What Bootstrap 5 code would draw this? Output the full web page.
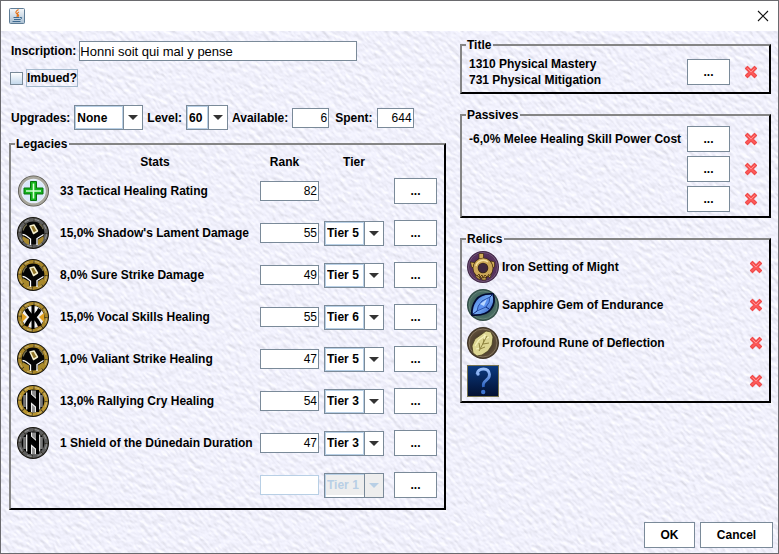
<!DOCTYPE html>
<html lang="en">
<head>
<meta charset="utf-8">
<meta name="viewport" content="width=device-width, initial-scale=1">
<title>Legendary item</title>
<link href="https://cdn.jsdelivr.net/npm/bootstrap@5.3.0/dist/css/bootstrap.min.css" rel="stylesheet">
<style>
  body { font: bold 12px/14px "Liberation Sans", Arial, sans-serif; color: #000; }
  .win { border: 1px solid #6a6a6e; background: #fff; }
  .titlebar { height: 30px; padding: 0 9px 0 8px; }
  .plain-btn { background: none; border: 0; padding: 0; line-height: 0; }
  .surface {
    background: #f0f0fb url("data:image/svg+xml,%3Csvg xmlns='http://www.w3.org/2000/svg' width='1000' height='700'%3E%3Cfilter id='f' x='0' y='0' width='1' height='1' color-interpolation-filters='sRGB'%3E%3CfeTurbulence type='fractalNoise' baseFrequency='.13 .26' numOctaves='3' seed='4'/%3E%3CfeDiffuseLighting surfaceScale='.4' diffuseConstant='1.12' lighting-color='%23f3f3ff'%3E%3CfeDistantLight azimuth='235' elevation='62'/%3E%3C/feDiffuseLighting%3E%3C/filter%3E%3Crect x='-700' y='-1200' width='2600' height='2600' transform='rotate(48)' filter='url(%23f)'/%3E%3C/svg%3E");
  }
  .main-grid { display: grid; grid-template-columns: minmax(0, 437fr) minmax(0, 311fr); column-gap: 14px; padding: 7px 7px 0 8px; }
  .side { display: flex; flex-direction: column; gap: 14px; }
  .group-box { border: 2px solid; border-color: #858585 #000 #000 #858585; padding: 0; margin: 0; }
  .group-box > legend { float: none; width: auto; margin: 0 0 0 4px; padding: 0 2px 0 1px; font: inherit; }
  .field { height: 20px; border: 1px solid #7a8a99; border-radius: 0; background: #fff; padding: 0; font-weight: 400; font-size: 13px; line-height: 16px; color: #000; min-width: 0; }
  .num { width: 59px; padding-right: 1px; font-size: 12px; text-align: right; }
  .num-sm { width: 37px; }
  .field:disabled { border-color: #b8cfe5; }
  .combo {
    --frame: #b8cfe5; --line: #7a8a99;
    appearance: none; height: 25px; border: 1px solid #7a8a99; border-radius: 0; padding: 0 20px 0 2px; font: inherit; color: #000; opacity: 1;
    background:
      url("data:image/svg+xml,%3Csvg xmlns='http://www.w3.org/2000/svg' width='10' height='5'%3E%3Cpath d='M0 0h10L5 5z' fill='%23333'/%3E%3C/svg%3E") right 4px center / 10px 5px no-repeat,
      linear-gradient(var(--line), var(--line)) right 18px top / 1px 100% no-repeat,
      linear-gradient(var(--frame), var(--frame)) right 19px top / 1px 100% no-repeat,
      linear-gradient(var(--frame), var(--frame)) left top / 1px 100% no-repeat,
      linear-gradient(var(--frame), var(--frame)) left top / calc(100% - 19px) 1px no-repeat,
      linear-gradient(var(--frame), var(--frame)) left bottom / calc(100% - 19px) 1px no-repeat,
      #fff;
  }
  .combo:disabled {
    color: #b8cfe5;
    background:
      url("data:image/svg+xml,%3Csvg xmlns='http://www.w3.org/2000/svg' width='10' height='5'%3E%3Cpath d='M0 0h10L5 5z' fill='%23b8cfe5'/%3E%3C/svg%3E") right 4px center / 10px 5px no-repeat,
      linear-gradient(var(--line), var(--line)) right 18px top / 1px 100% no-repeat,
      linear-gradient(var(--frame), var(--frame)) left top / 1px 100% no-repeat,
      linear-gradient(var(--frame), var(--frame)) left top / calc(100% - 19px) 1px no-repeat,
      linear-gradient(#fff, #fff) left bottom / calc(100% - 19px) 2px no-repeat,
      #eee;
  }
  .combo-tier { width: 60px; }
  .combo-up { width: 69px; }
  .combo-lv { width: 42px; }
  .push { height: 26px; background: #fff; border: 1px solid #7a8a99; border-radius: 0; padding: 0; font: inherit; color: #000; }
  .push-dots { width: 43px; }
  .push-ok { width: 51px; }
  .push-cancel { width: 73px; }
  .tick { appearance: none; width: 13px; height: 13px; border: 1px solid #7a8a99; margin: 0 3px 0 1px; background: linear-gradient(#fff, #c4d8ec); }
  .tick:checked { background: #7a8a99; }
  .tick-label { border: 1px solid #a3b8cc; height: 18px; line-height: 16px; }
  .row-insc { height: 26px; gap: 3px; padding-left: 2px; }
  .row-insc .field { width: 278px; }
  .row-imb { height: 28px; }
  .row-up { height: 25px; margin: 13px 0 7px; gap: 4px; padding-left: 2px; }
  .row-up .num-sm { margin-right: 2px; }
  .legacies { table-layout: fixed; width: 100%; margin-bottom: 2px; }
  .legacies td { padding: 0; height: 42px; vertical-align: middle; }
  .legacies thead th, .legacies thead td { height: 19px; padding: 3px 10px 0 0; text-align: center; }
  .legacies thead th.rank-head { padding-right: 15px; }
  .legacies .c-icon { width: 49px; }
  .legacies .c-rank { width: 64px; }
  .legacies .c-tier { width: 70px; }
  .legacies .c-btn { width: 50px; }
  .legacies td:first-child { padding-left: 6px; }
  .glyph { width: 32px; height: 32px; display: block; flex: none; }
  .cross { width: 14px; height: 14px; display: block; }
  .title-body { padding: 4px 11px 4px 7px; }
  .title-body p { line-height: 16px; }
  .passive-body { padding: 4px 11px 4px 7px; display: grid; grid-template-columns: minmax(0, 1fr); row-gap: 4px; }
  .relic-body { padding: 5px 6px 4px 5px; display: grid; grid-template-columns: minmax(0, 1fr); row-gap: 6px; }
  .cross-gap { gap: 14px; }
  .relic-name { margin: 0 auto 0 3px; }
  .foot { padding: 11px 5px 5px; gap: 5px; }
</style>
<script src="https://cdn.jsdelivr.net/npm/bootstrap@5.3.0/dist/js/bootstrap.bundle.min.js"></script>
</head>
<body>
<svg width="0" height="0" class="position-absolute" aria-hidden="true">
  <defs>
    <linearGradient id="gGem" x1="0" y1="0" x2="1" y2="1"><stop offset="0" stop-color="#2c62d0"/><stop offset=".5" stop-color="#7db2f8"/><stop offset="1" stop-color="#1b46b4"/></linearGradient>
    <linearGradient id="gNight" x1="0" y1="0" x2="0" y2="1"><stop offset="0" stop-color="#0b3a80"/><stop offset="1" stop-color="#020f30"/></linearGradient>
    <linearGradient id="gAsk" x1="0" y1="0" x2="0" y2="1"><stop offset="0" stop-color="#9cc0fa"/><stop offset="1" stop-color="#2c62c0"/></linearGradient>
    <radialGradient id="gPurple"><stop offset="0" stop-color="#2c1230"/><stop offset=".8" stop-color="#59345f"/><stop offset="1" stop-color="#3c2442"/></radialGradient>
    <radialGradient id="gTeal"><stop offset="0" stop-color="#1c3834"/><stop offset=".8" stop-color="#4a6e66"/><stop offset="1" stop-color="#2c4640"/></radialGradient>
    <radialGradient id="gBrown"><stop offset="0" stop-color="#2c241a"/><stop offset=".8" stop-color="#5c4c38"/><stop offset="1" stop-color="#3a3024"/></radialGradient>

    <symbol id="cross" viewBox="0 0 14 14">
      <path d="M1.500 3.500l2-2L7 5l3.500-3.500 2 2L9 7l3.500 3.500-2 2L7 9l-3.500 3.500-2-2L5 7z" fill="#ff5c5c" stroke="#f04c4c" stroke-width="1.200" stroke-linejoin="round"/>
      <path d="M3.500 3.500L7 7l3.500-3.500" fill="none" stroke="#ff9090" stroke-width="1"/>
    </symbol>
    <symbol id="ring" viewBox="0 0 32 32">
      <circle cx="16" cy="16" r="16" fill="#14120c"/>
      <circle cx="16" cy="16" r="13.200" fill="#050505" stroke="currentColor" stroke-width="3.600"/>
      <circle cx="16" cy="16" r="13.600" fill="none" stroke="#fff" stroke-opacity=".35" stroke-width="1" stroke-dasharray="6 4.700"/>
      <circle cx="16" cy="16" r="13.200" fill="none" stroke="#1a1608" stroke-opacity=".6" stroke-width="3" stroke-dasharray="1.200 9.170"/>
    </symbol>
    <symbol id="runeY" viewBox="0 0 32 32">
      <path d="M5.500 19l6.500 3.500V28q-4.500-1.500-6.500-6z" fill="#a8892c"/>
      <path d="M26.500 19L21 22.500V28q4.500-2 5.500-6z" fill="#a8892c"/>
      <path d="M5.500 17.500q2 0 4 1.500l4 3V28" fill="none" stroke="#fff" stroke-width="1.300"/>
      <path d="M26.500 17.500L20 21.500V28" fill="none" stroke="#fff" stroke-width="1.300"/>
      <path d="M6 13.500Q7 9.500 10 7.500M22.500 7Q25 9 26 12" fill="none" stroke="#77704e" stroke-width="1.100"/>
      <path d="M13 9l4-1 3.500 6-4 2.500z" fill="#8f7428" stroke="#f4eecb" stroke-width="1.500" stroke-linejoin="round"/>
    </symbol>
    <symbol id="runeX" viewBox="0 0 32 32">
      <circle cx="16" cy="16" r="11" fill="#f0f0f0"/>
      <path d="M5 12l5 4-5 5zM27 12l-5 4 5 5z" fill="#e0a020"/>
      <path d="M8.500 24.500l2.500-3.500 1 5zM20.500 26l.5-4 3 3z" fill="#ee7c14"/>
      <path d="M9 8q3 6 7 8-4 2-7 9M23 8q-3 6-7 8 4 2 7 9" fill="none" stroke="#000" stroke-width="4"/>
      <path d="M16 4v24" stroke="#000" stroke-width="3"/>
      <path d="M13 5.500v4M19 5.500v4" stroke="#fff" stroke-width="1.500"/>
    </symbol>
    <symbol id="runeH" viewBox="0 0 32 32">
      <path d="M7.500 10v12M24.500 10v12" stroke="#777" stroke-width="2.600"/>
      <path d="M9.700 7.500v17M22.600 7.500v17" stroke="#f4f4f4" stroke-width="1.300"/>
      <path d="M14.500 5.500v5l4.500 4v-9zM14.500 18l4.500 4v5.500h-4.500z" fill="#8e8e8e"/>
      <path d="M14.500 27v-8.500l4 3.500v5M14.500 5.500v4l4.500 4" fill="none" stroke="#ececec" stroke-width="1.100"/>
      <path d="M12.300 5v22M20.700 5v22" stroke="#000" stroke-width="2.800"/>
      <path d="M12 10l9 8" stroke="#000" stroke-width="3.500"/>
    </symbol>
  </defs>
</svg>

<div class="win min-vh-100 d-flex flex-column">
  <header class="titlebar d-flex align-items-center justify-content-between">
    <svg width="16" height="16" viewBox="0 0 16 16" role="img" aria-label="Java">
      <defs><linearGradient id="gJava" x1="0" y1="0" x2="0" y2="1"><stop offset="0" stop-color="#f6f8fa"/><stop offset="1" stop-color="#a9bfd2"/></linearGradient></defs>
      <rect x=".5" y=".5" width="15" height="15" rx="1" fill="url(#gJava)" stroke="#5f7d96"/>
      <path d="M9.500 1.500Q5.500 4 7.500 5.500T7.500 8.500M10 4Q7.500 5 9 6.500T8.500 8.500" fill="none" stroke="#e8761c" stroke-width="1.100"/>
      <path d="M4.500 9.500h6M5 11.500h5M3.500 13.500h8M11 9.500q2.500-.5 1.500 1t-2.500 1" fill="none" stroke="#3f6a90" stroke-width="1"/>
    </svg>
    <button type="button" class="plain-btn" aria-label="Close"><svg width="12" height="12" viewBox="0 0 12 12"><path d="M1 1l10 10M11 1L1 11" stroke="#111" stroke-width="1.100"/></svg></button>
  </header>

  <div class="surface flex-grow-1 d-flex flex-column">
    <main class="main-grid">
      <div>
        <div class="row-insc d-flex align-items-center">
          <label for="insc">Inscription:</label>
          <input id="insc" class="field" type="text" value="Honni soit qui mal y pense">
        </div>
        <div class="row-imb d-flex align-items-center">
          <input id="imbued" class="tick" type="checkbox">
          <label for="imbued" class="tick-label">Imbued?</label>
        </div>
        <div class="row-up d-flex align-items-center">
          <label for="upg">Upgrades:</label>
          <select id="upg" class="combo combo-up"><option>None</option></select>
          <label for="lvl">Level:</label>
          <select id="lvl" class="combo combo-lv"><option>60</option></select>
          <label for="avail">Available:</label>
          <input id="avail" class="field num num-sm" type="text" value="6">
          <label for="spent">Spent:</label>
          <input id="spent" class="field num num-sm" type="text" value="644">
        </div>

        <fieldset class="group-box">
          <legend>Legacies</legend>
          <table class="legacies">
            <colgroup><col class="c-icon"><col><col class="c-rank"><col class="c-tier"><col class="c-btn"></colgroup>
            <thead>
              <tr><td></td><th scope="col">Stats</th><th scope="col" class="rank-head">Rank</th><th scope="col">Tier</th><td></td></tr>
            </thead>
            <tbody>
              <tr>
                <td><svg class="glyph" viewBox="0 0 32 32">
                  <circle cx="16.500" cy="16" r="15.500" fill="#55544c"/><circle cx="16.500" cy="16" r="13.500" fill="#edf3fa" stroke="#a8a69c" stroke-width="2.400"/>
                  <circle cx="16.500" cy="16" r="11.500" fill="#dbe8fa"/>
                  <path d="M13.500 6.500h6v6.500H26v6h-6.500v6.500h-6V19H7v-6h6.500z" fill="#12b41c" stroke="#07720d"/>
                  <path d="M16.500 8.500v15M9 16h15" stroke="#d8ffd8" stroke-width="1.600"/>
                </svg></td>
                <td>33 Tactical Healing Rating</td>
                <td><input class="field num" type="text" value="82" aria-label="Rank, Tactical Healing Rating"></td>
                <td></td>
                <td><button type="button" class="push push-dots">...</button></td>
              </tr>
              <tr>
                <td><svg class="glyph"><use href="#ring" color="#5c5c5c"/><use href="#runeY"/></svg></td>
                <td>15,0% Shadow's Lament Damage</td>
                <td><input class="field num" type="text" value="55" aria-label="Rank, Shadow's Lament Damage"></td>
                <td><select class="combo combo-tier" aria-label="Tier, Shadow's Lament Damage"><option>Tier 5</option></select></td>
                <td><button type="button" class="push push-dots">...</button></td>
              </tr>
              <tr>
                <td><svg class="glyph"><use href="#ring" color="#a98728"/><use href="#runeY"/></svg></td>
                <td>8,0% Sure Strike Damage</td>
                <td><input class="field num" type="text" value="49" aria-label="Rank, Sure Strike Damage"></td>
                <td><select class="combo combo-tier" aria-label="Tier, Sure Strike Damage"><option>Tier 5</option></select></td>
                <td><button type="button" class="push push-dots">...</button></td>
              </tr>
              <tr>
                <td><svg class="glyph"><use href="#ring" color="#a98728"/><use href="#runeX"/></svg></td>
                <td>15,0% Vocal Skills Healing</td>
                <td><input class="field num" type="text" value="55" aria-label="Rank, Vocal Skills Healing"></td>
                <td><select class="combo combo-tier" aria-label="Tier, Vocal Skills Healing"><option>Tier 6</option></select></td>
                <td><button type="button" class="push push-dots">...</button></td>
              </tr>
              <tr>
                <td><svg class="glyph"><use href="#ring" color="#a98728"/><use href="#runeY"/></svg></td>
                <td>1,0% Valiant Strike Healing</td>
                <td><input class="field num" type="text" value="47" aria-label="Rank, Valiant Strike Healing"></td>
                <td><select class="combo combo-tier" aria-label="Tier, Valiant Strike Healing"><option>Tier 5</option></select></td>
                <td><button type="button" class="push push-dots">...</button></td>
              </tr>
              <tr>
                <td><svg class="glyph"><use href="#ring" color="#b8942e"/><use href="#runeH"/></svg></td>
                <td>13,0% Rallying Cry Healing</td>
                <td><input class="field num" type="text" value="54" aria-label="Rank, Rallying Cry Healing"></td>
                <td><select class="combo combo-tier" aria-label="Tier, Rallying Cry Healing"><option>Tier 3</option></select></td>
                <td><button type="button" class="push push-dots">...</button></td>
              </tr>
              <tr>
                <td><svg class="glyph"><use href="#ring" color="#5c5c5c"/><use href="#runeH"/></svg></td>
                <td class="text-nowrap">1 Shield of the Dúnedain Duration</td>
                <td><input class="field num" type="text" value="47" aria-label="Rank, Shield of the Dúnedain Duration"></td>
                <td><select class="combo combo-tier" aria-label="Tier, Shield of the Dúnedain Duration"><option>Tier 3</option></select></td>
                <td><button type="button" class="push push-dots">...</button></td>
              </tr>
              <tr>
                <td></td>
                <td></td>
                <td><input class="field num" type="text" disabled aria-label="Rank, empty slot"></td>
                <td><select class="combo combo-tier" disabled aria-label="Tier, empty slot"><option>Tier 1</option></select></td>
                <td><button type="button" class="push push-dots">...</button></td>
              </tr>
            </tbody>
          </table>
        </fieldset>
      </div>

      <div class="side">
        <fieldset class="group-box">
          <legend>Title</legend>
          <div class="title-body d-flex align-items-center justify-content-between">
            <div><p class="m-0">1310 Physical Mastery</p><p class="m-0">731 Physical Mitigation</p></div>
            <div class="d-flex align-items-center cross-gap">
              <button type="button" class="push push-dots">...</button>
              <button type="button" class="plain-btn" aria-label="Clear title"><svg class="cross"><use href="#cross"/></svg></button>
            </div>
          </div>
        </fieldset>

        <fieldset class="group-box">
          <legend>Passives</legend>
          <div class="passive-body">
            <div class="d-flex align-items-center justify-content-between">
              <span class="text-nowrap">-6,0% Melee Healing Skill Power Cost</span>
              <div class="d-flex align-items-center cross-gap">
                <button type="button" class="push push-dots">...</button>
                <button type="button" class="plain-btn" aria-label="Clear passive 1"><svg class="cross"><use href="#cross"/></svg></button>
              </div>
            </div>
            <div class="d-flex align-items-center justify-content-end cross-gap">
              <button type="button" class="push push-dots">...</button>
              <button type="button" class="plain-btn" aria-label="Clear passive 2"><svg class="cross"><use href="#cross"/></svg></button>
            </div>
            <div class="d-flex align-items-center justify-content-end cross-gap">
              <button type="button" class="push push-dots">...</button>
              <button type="button" class="plain-btn" aria-label="Clear passive 3"><svg class="cross"><use href="#cross"/></svg></button>
            </div>
          </div>
        </fieldset>

        <fieldset class="group-box">
          <legend>Relics</legend>
          <div class="relic-body">
            <div class="d-flex align-items-center">
              <svg class="glyph" viewBox="0 0 32 32">
                <circle cx="16" cy="16" r="16" fill="url(#gPurple)"/><circle cx="16" cy="16" r="14.500" fill="none" stroke="#8f7395" stroke-opacity=".6"/>
                <path d="M12 2.500h4.500V9H12zM3.500 11l6 1-1 6-4-2zM24 10l3.500 1v5l-4 1zM8 21l5 5v3l-4-3zM14 25h5v4h-4zM20 24l5-3-2 6z" fill="#d2ac58" stroke="#3a260c" stroke-width=".7"/>
                <circle cx="16" cy="17" r="7.500" fill="#40283e" stroke="#3a260c" stroke-width="5.600"/>
                <circle cx="16" cy="17" r="7.500" fill="none" stroke="#cda858" stroke-width="4.400"/>
                <path d="M9 15a7.500 7.500 0 0 1 12-4" fill="none" stroke="#f6e2a0" stroke-width="1.500"/>
                <path d="M10 25l2-2 1 3 2-2 1 3 2-3 2 2 2-3" fill="none" stroke="#5a3c12"/>
              </svg>
              <span class="relic-name">Iron Setting of Might</span>
              <button type="button" class="plain-btn" aria-label="Remove Iron Setting of Might"><svg class="cross"><use href="#cross"/></svg></button>
            </div>
            <div class="d-flex align-items-center">
              <svg class="glyph" viewBox="0 0 32 32">
                <circle cx="16" cy="16" r="16" fill="url(#gTeal)"/><circle cx="16" cy="16" r="14" fill="none" stroke="#7f9c90" stroke-opacity=".6"/>
                <path d="M5 26q-1-8 4-15T26 5q3 8-2 15T5 26z" fill="url(#gGem)" stroke="#020a30" stroke-width="1.800"/>
                <path d="M10 22q0-5 5-10l8-4q0 6-4 10z" fill="#5a90f0" stroke="#10308a" stroke-width=".7"/>
                <path d="M13 15l7-5-3 7z" fill="#b9d8ff"/>
                <path d="M6 25l4-3M26 5l-3 3M19 18l3 2" stroke="#0a2478"/>
              </svg>
              <span class="relic-name">Sapphire Gem of Endurance</span>
              <button type="button" class="plain-btn" aria-label="Remove Sapphire Gem of Endurance"><svg class="cross"><use href="#cross"/></svg></button>
            </div>
            <div class="d-flex align-items-center">
              <svg class="glyph" viewBox="0 0 32 32">
                <circle cx="16" cy="16" r="16" fill="url(#gBrown)"/><circle cx="16" cy="16" r="14" fill="none" stroke="#9b8b70" stroke-opacity=".7"/>
                <path d="M6 26l-1-7 3-7 7-5 4-3 5 1 2 5-1 8-4 6-6 4-5 1z" fill="#ddd692" stroke="#4a4020" stroke-width=".8"/>
                <path d="M8 19l4-6 7-5M9 22l4-1M17 7l1 5 4-2" fill="none" stroke="#f6f2bc" stroke-width="1.200"/>
                <path d="M12 24l8-15M12 16l1 6 5-2M17 12l-1 5 6-1" fill="none" stroke="#8f8440" stroke-width="1"/>
              </svg>
              <span class="relic-name">Profound Rune of Deflection</span>
              <button type="button" class="plain-btn" aria-label="Remove Profound Rune of Deflection"><svg class="cross"><use href="#cross"/></svg></button>
            </div>
            <div class="d-flex align-items-center justify-content-between">
              <svg class="glyph" viewBox="0 0 32 32">
                <rect x=".5" y=".5" width="31" height="31" fill="url(#gNight)" stroke="#77734f"/>
                <path d="M10 9Q11 4 16.500 4T22.500 9.500Q22.500 13 19 15.500T16.500 22" fill="none" stroke="url(#gAsk)" stroke-width="2.800"/>
                <circle cx="11" cy="9" r="1.700" fill="#8db4f4"/><circle cx="16.200" cy="27" r="2.200" fill="#3d74d0"/>
              </svg>
              <button type="button" class="plain-btn" aria-label="Remove empty relic"><svg class="cross"><use href="#cross"/></svg></button>
            </div>
          </div>
        </fieldset>
      </div>
    </main>

    <footer class="foot d-flex justify-content-end mt-auto">
      <button type="button" class="push push-ok">OK</button>
      <button type="button" class="push push-cancel">Cancel</button>
    </footer>
  </div>
</div>
</body>
</html>
